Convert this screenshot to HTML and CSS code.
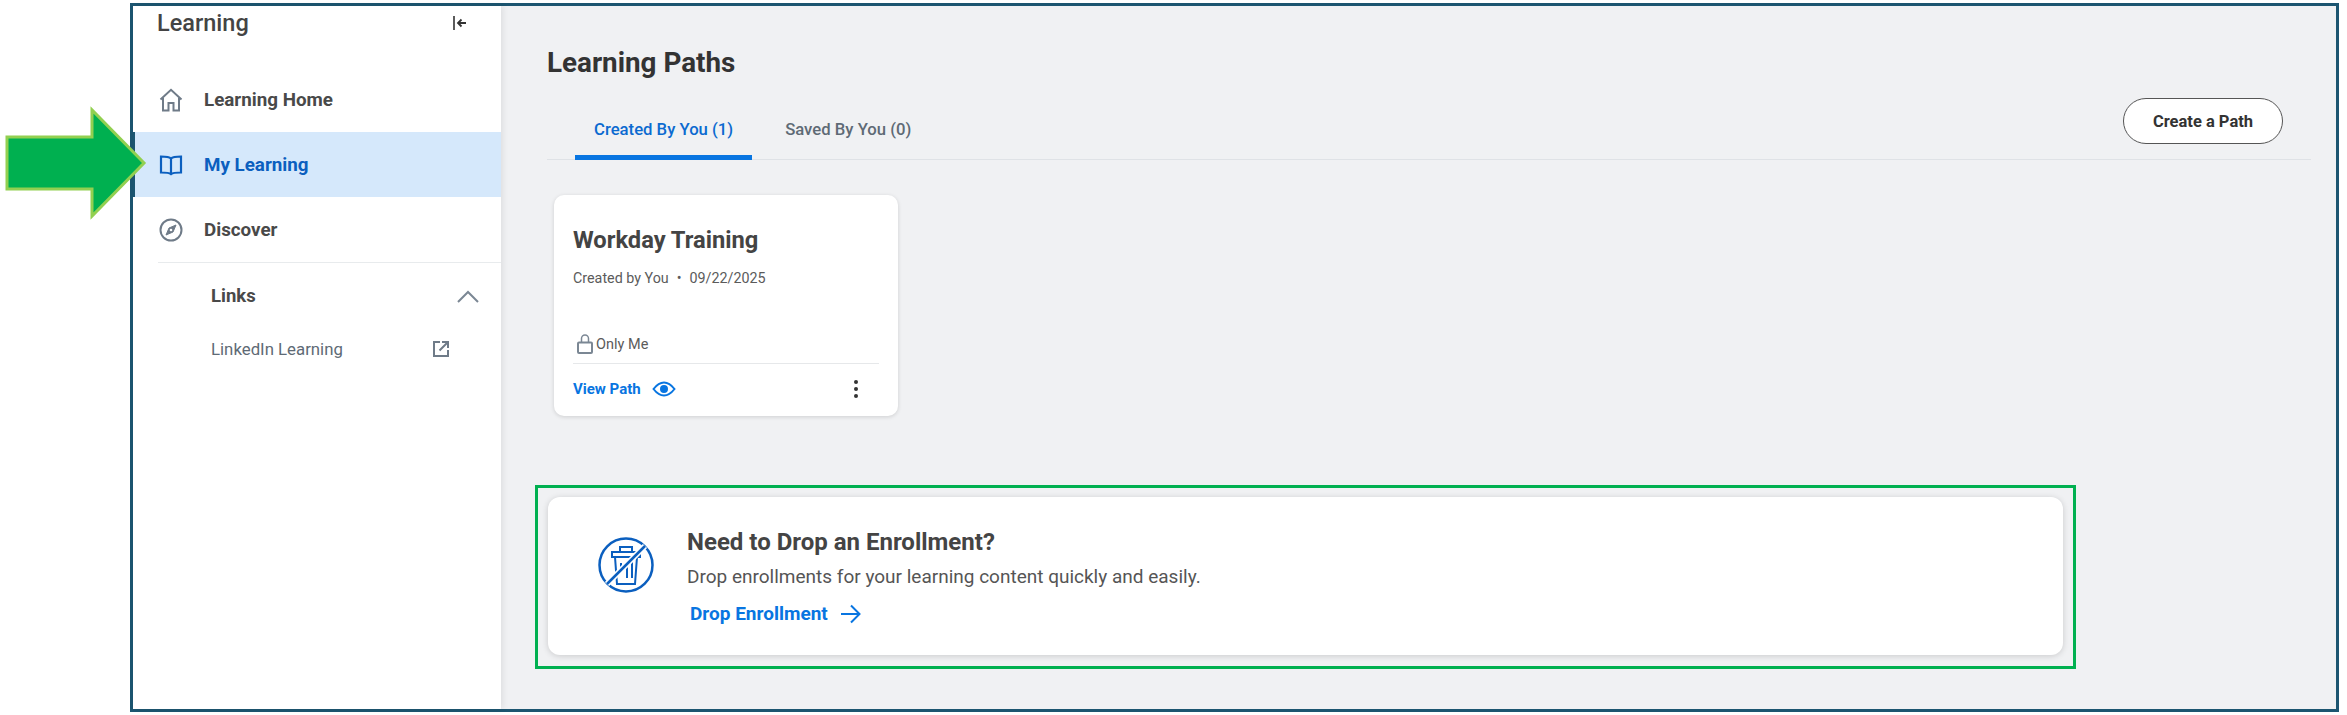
FILE: index.html
```html
<!DOCTYPE html>
<html lang="en">
<head>
  <meta charset="UTF-8" />
  <title>Learning Paths</title>
  <link rel="stylesheet" href="styles.css">
</head>
<body>
  <svg class="callout-arrow" width="150" height="116" viewBox="0 0 150 116">
    <polygon points="7,31 92,31 92,4 144,57 92,110 92,83 7,83" fill="#00b050" stroke="#92d050" stroke-width="3" />
  </svg>

  <div class="frame">
    <aside class="sidebar">
      <div class="side-head">
        <span class="side-title">Learning</span>
        <svg class="collapse" width="16" height="16" viewBox="0 0 16 16">
          <path d="M2 1v14" stroke="#333" stroke-width="1.6" fill="none" />
          <path d="M14 8H6M9.500 4.500L6 8l3.500 3.500" stroke="#333" stroke-width="1.8" fill="none" />
        </svg>
      </div>

      <nav class="side-nav">
        <a class="nav-item">
          <svg width="24" height="24" viewBox="0 0 24 24" fill="none" stroke="#6f7b88" stroke-width="2">
            <path d="M1.500 11.500L12 1.800l10.500 9.700" />
            <path d="M4 10v12.500h5.500V15h5v7.500H20V10" />
          </svg>
          <span>Learning Home</span>
        </a>
        <a class="nav-item active">
          <svg width="24" height="24" viewBox="0 0 24 24" fill="none" stroke="#0b5fbf" stroke-width="2.200">
            <path d="M12 5.500C10 3.500 6 3.500 2 3.500v16c4 0 8 0 10 1.500 2-1.500 6-1.500 10-1.500v-16c-4 0-8 0-10 2z" />
            <path d="M12 5.500V21" />
          </svg>
          <span>My Learning</span>
        </a>
        <a class="nav-item">
          <svg width="24" height="24" viewBox="0 0 24 24" fill="none" stroke="#6f7b88" stroke-width="2">
            <circle cx="12" cy="12" r="10.500" />
            <path d="M17 7l-7 3-3 7 7-3z" fill="#6f7b88" stroke-width="1" />
            <circle cx="12" cy="12" r="1.300" fill="#fff" stroke="none" />
          </svg>
          <span>Discover</span>
        </a>
      </nav>

      <div class="side-links">
        <div class="links-head">
          <span>Links</span>
          <svg width="22" height="13" viewBox="0 0 22 13" fill="none" stroke="#7b8794" stroke-width="2">
            <path d="M1 12L11 2l10 10" />
          </svg>
        </div>
        <div class="links-row">
          <span>LinkedIn Learning</span>
          <svg width="18" height="18" viewBox="0 0 18 18" fill="none" stroke="#6f7b88" stroke-width="2">
            <path d="M8 2H2v14h14v-6" />
            <path d="M7.500 10.500L15 3M10 2h6v6" />
          </svg>
        </div>
      </div>
    </aside>

    <main class="main">
      <h1 class="page-title">Learning Paths</h1>

      <div class="tab-bar">
        <div class="tabs">
          <span class="tab selected">Created By You (1)</span>
          <span class="tab">Saved By You (0)</span>
        </div>
        <button class="create-btn">Create a Path</button>
      </div>

      <div class="path-card">
        <h2>Workday Training</h2>
        <p class="meta">Created by You<span class="dot">•</span>09/22/2025</p>
        <div class="privacy">
          <svg width="16" height="20" viewBox="0 0 16 20" fill="none" stroke="#7b8794" stroke-width="2">
            <rect x="1" y="8.500" width="14" height="10.500" rx="1" />
            <path d="M4.500 8.500V4.500a3.500 3.500 0 0 1 7 0v4" stroke-width="1.500" />
          </svg>
          <span>Only Me</span>
        </div>
        <div class="card-foot">
          <a class="view-link">View Path
            <svg width="24" height="16" viewBox="0 0 24 16" fill="none" stroke="#0875e1" stroke-width="2">
              <path d="M1.500 8C5 3.500 8 1.500 12 1.500S19 3.500 22.500 8C19 12.500 16 14.500 12 14.500S5 12.500 1.500 8z" />
              <circle cx="12" cy="8" r="3" fill="#0875e1" />
            </svg>
          </a>
          <svg class="more" width="6" height="20" viewBox="0 0 6 20" fill="#333">
            <circle cx="3" cy="3" r="2" />
            <circle cx="3" cy="10" r="2" />
            <circle cx="3" cy="17" r="2" />
          </svg>
        </div>
      </div>

      <div class="highlight">
        <div class="drop-card">
          <svg class="drop-icon" width="58" height="58" viewBox="0 0 58 58" fill="none" stroke="#0b5fbf" stroke-width="2.500">
            <circle cx="29" cy="29" r="26.500" />
            <path d="M15 16h28v5H15zM23 16v-5h12v5M18 21l2 27h18l2-27" stroke-width="2" />
            <path d="M24 27v10M30 25v17M35 25v17" stroke-width="2" />
            <path d="M10 48L48 10" stroke="#fff" stroke-width="6" />
            <path d="M10 48L48 10" />
          </svg>
          <div class="drop-text">
            <h2>Need to Drop an Enrollment?</h2>
            <p>Drop enrollments for your learning content quickly and easily.</p>
            <a class="drop-link">Drop Enrollment
              <svg width="20" height="20" viewBox="0 0 20 20" fill="none" stroke="#0875e1" stroke-width="2">
                <path d="M0 10h18M10 1.500l8.500 8.500-8.500 8.500" />
              </svg>
            </a>
          </div>
        </div>
      </div>
    </main>
  </div>
</body>
</html>
```

FILE: styles.css
```css
* {
  box-sizing: border-box;
}

html, body {
  height: 100%;
}

body {
  margin: 0;
  padding: 3px 8px 3px 130px;
  background: #fff;
  font-family: Roboto, sans-serif;
  color: #333;
  overflow: hidden;
}

.callout-arrow {
  position: absolute;
  left: 0;
  top: 106px;
  z-index: 2;
}

.frame {
  display: flex;
  height: 709px;
  border: 3px solid #1c5570;
  background: #f0f1f3;
}

/* Sidebar */
.sidebar {
  width: 368px;
  flex: none;
  background: #fff;
  box-shadow: 2px 0 6px rgba(0,0,0,0.08);
}

.side-head {
  display: flex;
  justify-content: space-between;
  align-items: center;
  height: 34px;
  padding: 0 33px 0 24px;
}

.side-title {
  font-size: 23.500px;
  font-weight: 500;
  color: #444;
}

.side-nav {
  margin-top: 27px;
}

.nav-item {
  display: flex;
  align-items: center;
  gap: 21px;
  height: 65px;
  padding-left: 26px;
  font-size: 18.800px;
  font-weight: 700;
  color: #494949;
}

.nav-item.active {
  background: #d5e8fb;
  color: #0b5fbf;
  border-left: 2px solid #1c5570;
  padding-left: 24px;
}

.side-links {
  margin: 0 0 0 25px;
  border-top: 1px solid #e8ebed;
}

.links-head {
  display: flex;
  justify-content: space-between;
  align-items: center;
  height: 66px;
  padding: 0 22px 0 53px;
  font-size: 18.500px;
  font-weight: 700;
  color: #494949;
}

.links-row {
  display: flex;
  justify-content: space-between;
  align-items: center;
  height: 40px;
  padding: 0 51px 0 53px;
  font-size: 16.800px;
  color: #5e6a75;
}

/* Main area */
.main {
  flex: 1;
  min-width: 0;
  padding: 0 25px 0 46px;
}

.page-title {
  margin: 40px 0 0;
  font-size: 27.800px;
  line-height: 34px;
  font-weight: 700;
  color: #333;
}

.tab-bar {
  display: flex;
  justify-content: space-between;
  align-items: flex-end;
  height: 80px;
  border-bottom: 1px solid #dfe2e6;
}

.tabs {
  display: flex;
  margin-left: 28px;
}

.tab {
  height: 50px;
  padding: 0 19px;
  margin-right: 14px;
  margin-bottom: -1px;
  font-size: 16.700px;
  font-weight: 500;
  line-height: 40px;
  color: #5e6a75;
}

.tab.selected {
  color: #0b6ad0;
  border-bottom: 5px solid #0875e1;
  border-radius: 4px 4px 0 0;
}

.create-btn {
  width: 160px;
  height: 46px;
  margin: 0 28px 15px 0;
  background: #fff;
  border: 1px solid #555;
  border-radius: 23px;
  font-family: Roboto, sans-serif;
  font-size: 16.500px;
  font-weight: 700;
  color: #333;
}

.path-card {
  width: 344px;
  height: 221px;
  margin: 35px 0 0 7px;
  padding: 30px 19px 0;
  background: #fff;
  border-radius: 10px;
  box-shadow: 0 1px 4px rgba(0,0,0,0.14);
}

.path-card h2 {
  margin: 0;
  font-size: 23.700px;
  line-height: 30px;
  font-weight: 700;
  color: #444;
}

.meta {
  margin: 13px 0 0;
  font-size: 14.300px;
  line-height: 20px;
  color: #5b5b5b;
}

.dot {
  margin: 0 8px;
}

.privacy {
  display: flex;
  align-items: center;
  gap: 3px;
  margin: 45px 0 0 4px;
  height: 22px;
  font-size: 14.500px;
  color: #5b5b5b;
}

.card-foot {
  display: flex;
  justify-content: space-between;
  align-items: center;
  margin-top: 8px;
  height: 51px;
  padding-right: 20px;
  border-top: 1px solid #e6e8ea;
}

.view-link {
  display: flex;
  align-items: center;
  gap: 11px;
  font-size: 15px;
  font-weight: 700;
  color: #0875e1;
}

.highlight {
  width: 1541px;
  height: 184px;
  margin: 69px 0 0 -12px;
  padding: 9px 10px 11px 10px;
  border: 3px solid #00b050;
}

.drop-card {
  display: flex;
  align-items: center;
  gap: 32px;
  height: 100%;
  padding-left: 49px;
  background: #fff;
  border-radius: 12px;
  box-shadow: 0 1px 6px rgba(0,0,0,0.16);
}

.drop-icon {
  flex: none;
  margin-top: -23px;
}

.drop-text h2 {
  margin: 0;
  font-size: 24px;
  line-height: 30px;
  font-weight: 700;
  color: #444;
}

.drop-text p {
  margin: 8px 0 0;
  font-size: 19px;
  line-height: 24px;
  color: #555;
}

.drop-link {
  display: flex;
  align-items: center;
  gap: 13px;
  margin: 13px 0 0 3px;
  font-size: 19px;
  font-weight: 700;
  color: #0875e1;
}
```
